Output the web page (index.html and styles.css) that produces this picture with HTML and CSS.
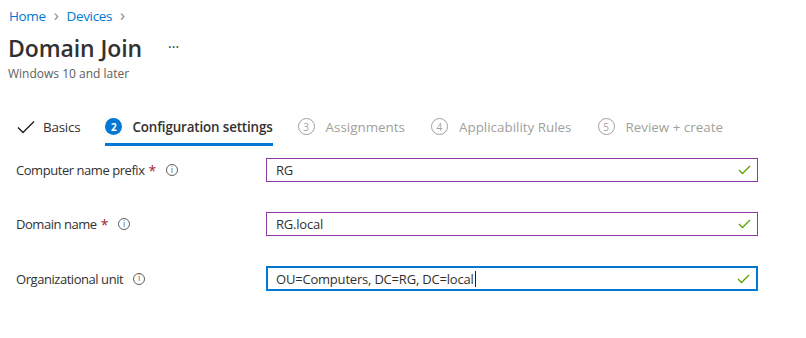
FILE: index.html
```html
<!DOCTYPE html>
<html lang="en">
<head>
<meta charset="utf-8">
<title>Domain Join</title>
<link rel="stylesheet" href="styles.css">
</head>
<body>
<div class="page">
  <nav class="crumbs">
    <a class="crumb" href="#">Home</a>
    <span class="sep">&#x203A;</span>
    <a class="crumb" href="#">Devices</a>
    <span class="sep">&#x203A;</span>
  </nav>
  <header class="title-row">
    <h1 class="title">Domain Join</h1>
    <span class="more">&middot;&middot;&middot;</span>
  </header>
  <div class="subtitle">Windows 10 and later</div>

  <div class="tabs">
    <div class="tab done">
      <svg class="tick" width="18" height="14" viewBox="0 0 18 14"><path d="M1 7.5 L6 12.5 L17 1.5" fill="none" stroke="#201f1e" stroke-width="1.4"/></svg>
      <span class="tab-label">Basics</span>
    </div>
    <div class="tab active">
      <span class="num">2</span>
      <span class="tab-label">Configuration settings</span>
    </div>
    <div class="tab off">
      <span class="num">3</span>
      <span class="tab-label">Assignments</span>
    </div>
    <div class="tab off">
      <span class="num">4</span>
      <span class="tab-label">Applicability Rules</span>
    </div>
    <div class="tab off">
      <span class="num">5</span>
      <span class="tab-label">Review + create</span>
    </div>
  </div>

  <form class="form">
    <div class="row">
      <div class="label">Computer name prefix <span class="req">*</span> <span class="info">i</span></div>
      <div class="field dirty"><span class="value">RG</span><svg class="ok" width="13" height="10" viewBox="0 0 13 10"><path d="M1 5 L4.5 8.5 L12 1" fill="none" stroke="#5ca300" stroke-width="1.3"/></svg></div>
    </div>
    <div class="row">
      <div class="label">Domain name <span class="req">*</span> <span class="info">i</span></div>
      <div class="field dirty"><span class="value">RG.local</span><svg class="ok" width="13" height="10" viewBox="0 0 13 10"><path d="M1 5 L4.5 8.5 L12 1" fill="none" stroke="#5ca300" stroke-width="1.3"/></svg></div>
    </div>
    <div class="row">
      <div class="label">Organizational unit <span class="info">i</span></div>
      <div class="field focus"><span class="value">OU=Computers, DC=RG, DC=local</span><span class="caret"></span><svg class="ok" width="13" height="10" viewBox="0 0 13 10"><path d="M1 5 L4.5 8.5 L12 1" fill="none" stroke="#5ca300" stroke-width="1.3"/></svg></div>
    </div>
  </form>
</div>
</body>
</html>
```
FILE: styles.css
```css
* { box-sizing: border-box; }
body {
  margin: 0;
  background: #ffffff;
  font-family: "Segoe UI", "Open Sans", "Noto Sans", sans-serif;
  color: #323130;
}
.page { padding: 6px 0 0 8px; }

.crumbs {
  display: flex;
  align-items: center;
  height: 20px;
  padding-left: 1px;
  font-size: 13.5px;
  letter-spacing: -0.35px;
}
.crumb { color: #0078d4; text-decoration: none; }
.sep { color: #8a8886; font-size: 17px; margin: 0 8px 2px 8px; line-height: 20px; }

.title-row {
  display: flex;
  align-items: center;
  height: 32px;
  margin-top: 6px;
}
.title {
  margin: 0;
  font-size: 23px;
  font-weight: 600;
  letter-spacing: -0.1px;
  color: #323130;
  line-height: 32px;
}
.more { margin-left: 26px; font-size: 14px; color: #323130; padding-bottom: 4px; }
.subtitle { font-size: 12px; line-height: 16px; color: #605e5c; margin-top: 2px; }

.tabs {
  display: flex;
  margin-top: 31px;
  padding-left: 9px;
  gap: 25px;
}
.tab {
  display: flex;
  align-items: center;
  gap: 10px;
  height: 33px;
  padding-bottom: 3px;
  border-bottom: 3px solid transparent;
  font-size: 13.4px;
  letter-spacing: -0.2px;
}
.tab.done { gap: 8px; }
.tab.active { border-bottom-color: #0078d4; font-weight: 600; color: #323130; letter-spacing: -0.15px; }
.tab.off { color: #a19f9d; letter-spacing: 0; gap: 11px; }
.tab.off + .tab.off { margin-left: 1px; }
.tab.off:last-child { margin-left: 3px; }
.tab.done .tab-label { color: #323130; }
.num {
  display: inline-flex;
  align-items: center;
  justify-content: center;
  width: 17px;
  height: 17px;
  border-radius: 50%;
  font-size: 10px;
  line-height: 1;
  letter-spacing: 0;
}
.active .num { background: #0078d4; color: #fff; font-weight: 700; }
.off .num { border: 1px solid #a19f9d; color: #a19f9d; }

.form {
  display: flex;
  flex-direction: column;
  gap: 30px;
  margin-top: 12px;
  padding-left: 8px;
}
.row {
  display: grid;
  grid-template-columns: 250px 492px;
  align-items: center;
}
.label { font-size: 13px; letter-spacing: -0.45px; color: #323130; display: flex; align-items: center; }
.req { color: #a4262c; margin-left: 4px; font-size: 14px; }
.info {
  display: inline-flex;
  align-items: center;
  justify-content: center;
  width: 12px;
  height: 12px;
  border: 1px solid #605e5c;
  border-radius: 50%;
  font-size: 8px;
  color: #605e5c;
  margin-left: 10px;
  letter-spacing: 0;
  font-family: "DejaVu Sans", sans-serif;
}
.field {
  height: 24px;
  display: flex;
  align-items: center;
  padding: 0 6px 0 9px;
  font-size: 13px;
  letter-spacing: -0.2px;
  color: #323130;
}
.field.dirty { border: 1px solid #8e39a8; }
.field.focus { border: 2px solid #0078d4; height: 25px; padding-left: 8px; }
.value { white-space: nowrap; }
.caret { width: 1px; height: 16px; background: #201f1e; margin-left: 1px; }
.ok { margin-left: auto; }
```
